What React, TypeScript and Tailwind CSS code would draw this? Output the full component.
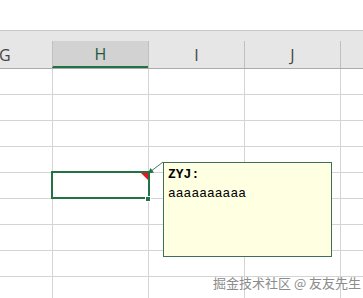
import React from "react";

const cols = ["G", "H", "I", "J", ""];

export default function App() {
  const rows = Array.from({ length: 9 });
  return (
    <div
      className="relative w-[363px] h-[298px] overflow-hidden bg-white"
      style={{ fontFamily: '"Open Sans", "Liberation Sans", sans-serif' }}
    >
      <div className="h-[30px] bg-white" />
      {/* header */}
      <div className="h-[38px] border-t border-[#c8c8c8] bg-[#e6e6e6] pt-[10px]">
        <div className="grid grid-cols-[52px_96px_96px_96px_1fr] h-[27px]">
          {cols.map((c, i) => (
            <div
              key={i}
              className={
                "flex items-center justify-center text-[16px] leading-none " +
                (i === 1
                  ? "bg-[#d2d2d2] border-b-2 border-[#217346] text-[#215a3c] border-l border-l-[#c0c0c0]"
                  : i === 0
                  ? "text-[#444] justify-start"
                  : "text-[#444] border-l border-[#c0c0c0]")
              }
            >
              {i === 0 ? <span className="-ml-[1px]">{c}</span> : c}
            </div>
          ))}
        </div>
      </div>
      {/* body */}
      {rows.map((_, r) => (
        <div
          key={r}
          className={
            "grid grid-cols-[52px_96px_96px_96px_1fr] h-[26px] border-t " +
            (r === 0 ? "border-[#ababab]" : "border-[#d4d4d4]")
          }
        >
          {cols.map((_, i) => (
            <div
              key={i}
              className={i === 0 ? "" : "border-l border-[#d4d4d4]"}
            />
          ))}
        </div>
      ))}

      {/* selected cell */}
      <div className="absolute left-[51px] top-[171px] w-[99px] h-[28px] border-2 border-[#217346]" />
      <div className="absolute left-[145px] top-[196px] w-[6px] h-[6px] bg-[#217346] border border-white" />
      <svg className="absolute left-[141px] top-[173px]" width="7" height="7" viewBox="0 0 7 7">
        <polygon points="0,0 7,0 7,7" fill="#e8141e" />
      </svg>

      {/* comment arrow */}
      <svg className="absolute left-[140px] top-[155px]" width="30" height="25" viewBox="0 0 30 25">
        <line x1="23" y1="7" x2="10" y2="17" stroke="#4a7a5e" strokeWidth="1" />
        <polygon points="8,18.5 10.5,13 14,17.5" fill="#217346" />
      </svg>

      {/* comment box */}
      <div
        className="absolute left-[163px] top-[162px] w-[169px] h-[95px] border border-[#3f6f55] bg-[#ffffe1] pl-[4px] pt-[3px] text-[13px] leading-[17px] text-black"
        style={{ fontFamily: '"Liberation Mono", "DejaVu Sans Mono", monospace' }}
      >
        <div className="font-bold">ZYJ:</div>
        <div className="mt-[2px]">aaaaaaaaaa</div>
      </div>

      {/* watermark */}
      <div
        className="absolute left-[213px] top-[274px] text-[13px] leading-[17px] text-[#8c8c8c] whitespace-nowrap"
        style={{ fontFamily: '"Noto Sans CJK SC", "Noto Sans", sans-serif' }}
      >
        掘金技术社区 @ 友友先生
      </div>
    </div>
  );
}
